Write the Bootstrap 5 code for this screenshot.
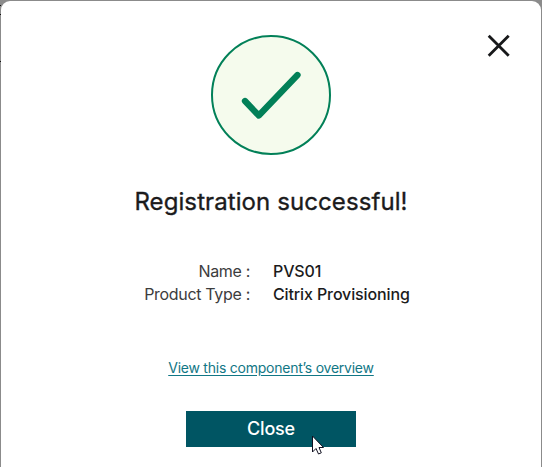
<!DOCTYPE html>
<html lang="en">
<head>
<meta charset="utf-8">
<meta name="viewport" content="width=device-width, initial-scale=1">
<title>Registration</title>
<link href="https://cdn.jsdelivr.net/npm/bootstrap@5.3.0/dist/css/bootstrap.min.css" rel="stylesheet">
<style>
body{background:#8b8b8b;font-family:Inter,Roboto,"Liberation Sans",sans-serif;color:#1b1b1c;height:467px;overflow:hidden}
.page-edge{position:absolute;left:0;width:1px;height:1px;background:#111}
.edge-a{top:5px}.edge-b{top:14px}.edge-c{top:61px}
.dialog-panel{position:relative;margin:1px 1px 0;height:480px;border:0;border-radius:9px;background:#fff;padding-top:34px}
.dismiss{position:absolute;right:30px;top:33px;line-height:0}
.panel-title{font-size:24px;line-height:30px;font-weight:400;-webkit-text-stroke:.35px #1b1b1c;margin-top:32px;letter-spacing:.09px}
.details{font-size:16px;line-height:23px;margin-top:43px}
.details dt{width:249px;font-weight:400;color:#3c3c3d;letter-spacing:-.32px}
.details dd{font-weight:500;margin-left:23px;letter-spacing:-.12px}
.overview{font-size:14px;line-height:20px;color:#117785;margin-top:52px;letter-spacing:-.24px;text-underline-offset:2px}
.btn-done{width:170px;height:36px;margin-top:33px;background:#005563;color:#fff;font-size:18px;line-height:24px;font-weight:500;letter-spacing:-.2px;padding-top:1px}
.btn-done:hover{background:#005563;color:#fff}
.pointer{position:absolute;left:310px;top:434px}
</style>
</head>
<body>
<i class="page-edge edge-a"></i><i class="page-edge edge-b"></i><i class="page-edge edge-c"></i>
<main class="dialog-panel d-flex flex-column align-items-center">
  <a class="dismiss" href="#" aria-label="Close dialog"><svg width="24" height="24" viewBox="0 0 24 24"><path d="M1.700 1.700 21.700 21.700M21.700 1.700 1.700 21.700" stroke="#17181a" stroke-width="2.800" fill="none"/></svg></a>
  <svg width="120" height="120" viewBox="0 0 120 120"><circle cx="60" cy="60" r="59" fill="#f5fbed" stroke="#028058" stroke-width="2"/><path d="M34 66 47.800 80.500 86.500 40" fill="none" stroke="#028058" stroke-width="6.300" stroke-linecap="round" stroke-linejoin="round"/></svg>
  <h1 class="panel-title mb-0">Registration successful!</h1>
  <dl class="details w-100 mb-0">
    <div class="d-flex"><dt class="text-end">Name :</dt><dd class="mb-0">PVS01</dd></div>
    <div class="d-flex"><dt class="text-end">Product Type :</dt><dd class="mb-0">Citrix Provisioning</dd></div>
  </dl>
  <a class="overview" href="#">View this component’s overview</a>
  <button class="btn btn-done rounded-0 border-0 p-0" type="button">Close</button>
  <svg class="pointer" width="14" height="21" viewBox="0 0 14 21"><path d="M1.500 1V17L5 13.500 7.500 19 10.300 17.800 8 12.500H12.500Z" fill="#fff" stroke="#101020" stroke-width="1"/></svg>
</main>
<script src="https://cdn.jsdelivr.net/npm/bootstrap@5.3.0/dist/js/bootstrap.bundle.min.js"></script>
</body>
</html>
